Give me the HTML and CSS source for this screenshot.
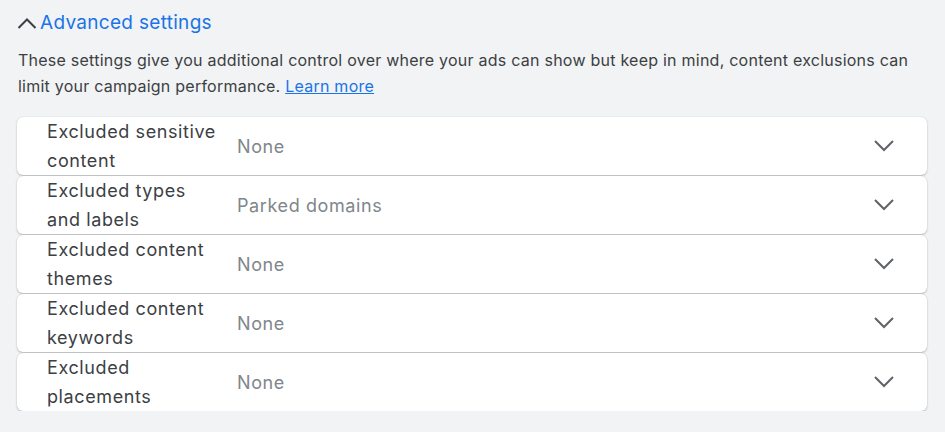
FILE: index.html
```html
<!DOCTYPE html>
<html>
<head>
<meta charset="utf-8">
<link rel="stylesheet" href="styles.css">
</head>
<body>
<div class="page">
  <div class="header">
    <svg class="up" width="20" height="20" viewBox="0 0 20 20"><path d="M1.5 15 L10 6.5 L18.5 15" fill="none" stroke="#3c4043" stroke-width="2"/></svg>
    <span class="title">Advanced settings</span>
  </div>
  <p class="desc">These settings give you additional control over where your ads can show but keep in mind, content exclusions can limit your campaign performance. <a href="#">Learn more</a></p>
  <div class="list">
    <div class="row"><div class="label">Excluded sensitive content</div><div class="value">None</div><svg class="down" width="20" height="20" viewBox="0 0 20 20"><path d="M1 5 L10 14 L19 5" fill="none" stroke="#5f6368" stroke-width="2"/></svg></div>
    <div class="row"><div class="label">Excluded types and labels</div><div class="value">Parked domains</div><svg class="down" width="20" height="20" viewBox="0 0 20 20"><path d="M1 5 L10 14 L19 5" fill="none" stroke="#5f6368" stroke-width="2"/></svg></div>
    <div class="row"><div class="label">Excluded content themes</div><div class="value">None</div><svg class="down" width="20" height="20" viewBox="0 0 20 20"><path d="M1 5 L10 14 L19 5" fill="none" stroke="#5f6368" stroke-width="2"/></svg></div>
    <div class="row"><div class="label">Excluded content keywords</div><div class="value">None</div><svg class="down" width="20" height="20" viewBox="0 0 20 20"><path d="M1 5 L10 14 L19 5" fill="none" stroke="#5f6368" stroke-width="2"/></svg></div>
    <div class="row"><div class="label">Excluded placements</div><div class="value">None</div><svg class="down" width="20" height="20" viewBox="0 0 20 20"><path d="M1 5 L10 14 L19 5" fill="none" stroke="#5f6368" stroke-width="2"/></svg></div>
  </div>
</div>
</body>
</html>
```
FILE: styles.css
```css
html, body {
  margin: 0;
  padding: 0;
  background: #f1f3f4;
  font-family: Inter, Roboto, sans-serif;
  color: #3c4043;
}
.page {
  padding: 11px 18px 0 17px;
  width: 910px;
}
.header {
  display: flex;
  align-items: center;
  gap: 3px;
  height: 24px;
}
.up { display: block; }
.title {
  color: #1a73e8;
  font-size: 19px;
  line-height: 24px;
  letter-spacing: 0.3px;
}
.desc {
  margin: 12px 0 18px 1px;
  font-size: 16px;
  line-height: 26px;
  letter-spacing: 0.24px;
}
.desc a {
  color: #1a73e8;
  text-decoration: underline;
}
.list {
  display: flex;
  flex-direction: column;
  gap: 1px;
}
.row {
  display: flex;
  align-items: center;
  height: 58px;
  background: #fff;
  border-radius: 6px;
  box-shadow: 0 1px 2px rgba(60,64,67,0.3), 0 0 1px rgba(60,64,67,0.2);
  padding: 0 33px 0 30px;
}
.label {
  width: 174px;
  margin-right: 16px;
  font-size: 18px;
  line-height: 29px;
  letter-spacing: 0.6px;
  color: #3c4043;
}
.value {
  flex: 1;
  font-size: 18px;
  letter-spacing: 0.6px;
  color: #80868b;
}
.down { display: block; }
```
